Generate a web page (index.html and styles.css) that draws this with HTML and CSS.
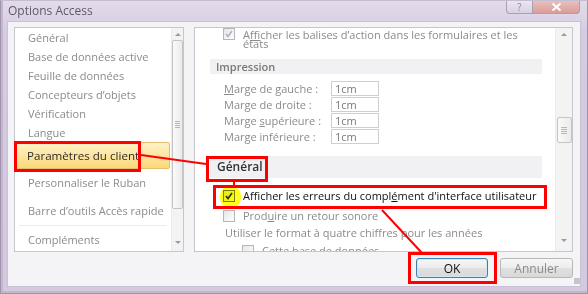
FILE: index.html
```html
<!DOCTYPE html>
<html lang="fr">
<head>
<meta charset="utf-8">
<title>Options Access</title>
<link rel="stylesheet" href="styles.css">
</head>
<body>
<div class="window">
  <div class="titlebar">
    <span class="title">Options Access</span>
    <div class="caption">
      <span class="cap help">?</span>
      <span class="cap close"><svg width="11" height="8" viewBox="0 0 11 8"><path d="M1.5 0.5 L9.5 7.5 M9.5 0.5 L1.5 7.5" stroke="#ffffff" stroke-width="2" fill="none"/></svg></span>
    </div>
  </div>
  <div class="client">
    <div class="panels">
      <div class="nav">
        <ul class="nav-list">
          <li class="item">Général</li>
          <li class="item">Base de données active</li>
          <li class="item">Feuille de données</li>
          <li class="item">Concepteurs d’objets</li>
          <li class="item">Vérification</li>
          <li class="item">Langue</li>
          <li class="item sel">Paramètres du client</li>
          <li class="item tall">Personnaliser le Ruban</li>
          <li class="item tall">Barre d’outils Accès rapide</li>
          <li class="sep"></li>
          <li class="item tall">Compléments</li>
        </ul>
        <div class="vscroll nav-scroll">
          <span class="arr"><span class="tri up"></span></span>
          <span class="thumb nav-thumb"><span class="grip"></span></span>
          <span class="fill"></span>
          <span class="arr arr-down"><span class="tri down"></span></span>
        </div>
      </div>
      <div class="content">
        <div class="pane">
          <div class="opt opt-first">
            <span class="cb cb-first"><svg class="chk" width="10" height="10" viewBox="0 0 10 10"><path d="M2 5 L4 7.5 L8 2" stroke="#a9b3c6" stroke-width="1.6" fill="none"/></svg></span>
            <span class="wrap">A<u>f</u>ficher les balises d’action dans les formulaires et les<br>états</span>
          </div>
          <div class="band">Impression</div>
          <div class="fields">
            <div class="field"><span class="lbl"><u>M</u>arge de gauche :</span><span class="input">1cm</span></div>
            <div class="field"><span class="lbl">Marge de droite :</span><span class="input">1cm</span></div>
            <div class="field"><span class="lbl">Marge <u>s</u>upérieure :</span><span class="input">1cm</span></div>
            <div class="field"><span class="lbl">Mar<u>g</u>e inférieure :</span><span class="input">1cm</span></div>
          </div>
          <div class="band band-strong">Général</div>
          <div class="opt opt-err">
            <span class="cb cb-on"><svg class="chk" width="10" height="10" viewBox="0 0 10 10"><path d="M2 5 L4 7.5 L8 2" stroke="#2b3a5a" stroke-width="1.7" fill="none"/></svg></span>
            <span>Afficher les erreurs du compl<u>é</u>ment d'interface utilisateur</span>
          </div>
          <div class="opt opt-snd">
            <span class="cb"></span>
            <span>Prod<u>u</u>ire un retour sonore</span>
          </div>
          <div class="plain">Utiliser le format à quatre chiffres pour les années</div>
          <div class="opt opt-sub">
            <span class="cb"></span>
            <span>Cette base de données</span>
          </div>
        </div>
        <div class="vscroll pane-scroll">
          <span class="arr"><span class="tri up"></span></span>
          <span class="thumb pane-thumb"><span class="grip"></span></span>
          <span class="fill"></span>
          <span class="arr arr-down2"><span class="tri down"></span></span>
        </div>
      </div>
    </div>
    <div class="footer">
      <button class="btn ok">OK</button>
      <button class="btn">Annuler</button>
      <span class="sizegrip"></span>
    </div>
  </div>
  <div class="marker"></div>
  <svg class="annot" width="588" height="294" viewBox="0 0 588 294">
    <g fill="none" stroke="#ff0000">
      <rect x="14.5" y="141.5" width="124" height="28" stroke-width="3"/>
      <rect x="206.5" y="156.5" width="59" height="23" stroke-width="3"/>
      <rect x="213.5" y="185.5" width="331" height="21" stroke-width="3"/>
      <rect x="408.5" y="252.5" width="86" height="29" stroke-width="3"/>
      <path d="M140 154 L205 163" stroke-width="2"/>
      <path d="M233 180 L233 185" stroke-width="2"/>
      <path d="M381 209 L421 252" stroke-width="2"/>
    </g>
  </svg>
</div>
</body>
</html>
```

FILE: styles.css
```css
html, body {
  margin: 0;
  padding: 0;
}
body {
  width: 588px;
  height: 294px;
  overflow: hidden;
  font-family: "Open Sans", "Noto Sans", sans-serif;
  background: #ffffff;
}
.window {
  position: relative;
  width: 588px;
  height: 294px;
  box-sizing: border-box;
  background: linear-gradient(#e3dbea, #d6cce2 30px, #d4cae0);
  border: 1px solid #a094ad;
  border-top-color: #c6bdd0;
  box-shadow: inset 2px 0 0 #c3b7d0, inset 0 -2px 0 #c3b7d0;
  padding: 0 6px 6px 6px;
  display: flex;
  flex-direction: column;
}
.titlebar {
  height: 20px;
  display: flex;
  justify-content: space-between;
  align-items: flex-start;
}
.title {
  margin: 3px 0 0 1px;
  font-size: 12px;
  line-height: 14px;
  color: #5f5a69;
}
.caption {
  display: flex;
  margin-right: 1px;
}
.cap {
  height: 13px;
  box-sizing: border-box;
  border: 1px solid #a99fb6;
  border-top: none;
  display: flex;
  align-items: center;
  justify-content: center;
}
.help {
  width: 27px;
  border-radius: 0 0 0 4px;
  background: linear-gradient(#ebe6f0, #d9d1e3);
  color: #8e879a;
  font-size: 10px;
  line-height: 12px;
}
.close {
  width: 47px;
  border-left: none;
  border-radius: 0 0 4px 0;
  background: linear-gradient(#e9c0bc, #d99d98);
}
.client {
  flex: 1;
  box-sizing: border-box;
  border: 1px solid #cbc1d6;
  background: #f4f3f6;
  padding: 5px 7px 0 6px;
  display: flex;
  flex-direction: column;
}
.panels {
  display: flex;
  gap: 10px;
  height: 225px;
}
.nav {
  width: 170px;
  box-sizing: border-box;
  border: 1px solid #c8c6cd;
  background: #ffffff;
  display: flex;
}
.nav-list {
  flex: 1;
  list-style: none;
  margin: 0;
  padding: 0;
  overflow: hidden;
}
.item {
  height: 19px;
  line-height: 19px;
  padding-left: 13px;
  font-size: 11px;
  color: #8d8a8a;
  white-space: nowrap;
}
.item.sel {
  box-sizing: border-box;
  height: 27px;
  width: 154px;
  margin-left: 1px;
  border: 1px solid #e2c06f;
  border-radius: 2px;
  background: linear-gradient(#fff2c8, #fde6a4 45%, #fcd97a);
  padding-left: 10px;
  line-height: 25px;
  font-size: 11.6px;
  color: #2c2c2c;
}
.item.tall {
  height: 28px;
  line-height: 28px;
}
.sep {
  height: 1px;
  margin: 0 4px;
  background: #ebebeb;
}
.vscroll {
  display: flex;
  flex-direction: column;
  align-items: center;
  background: #f3f3f3;
  border-left: 1px solid #ececec;
  box-sizing: border-box;
}
.nav-scroll {
  width: 12px;
}
.pane-scroll {
  width: 17px;
}
.arr {
  height: 12px;
  width: 100%;
  display: flex;
  align-items: center;
  justify-content: center;
  flex: none;
}
.arr-down {
  margin-bottom: 3px;
}
.arr-down2 {
  margin-bottom: 5px;
}
.tri {
  width: 0;
  height: 0;
  border-left: 3px solid transparent;
  border-right: 3px solid transparent;
}
.tri.up {
  border-bottom: 3px solid #9c9c9c;
}
.tri.down {
  border-top: 3px solid #9c9c9c;
}
.fill {
  flex: 1;
}
.thumb {
  box-sizing: border-box;
  border: 1px solid #c4c4c4;
  border-radius: 2px;
  background: linear-gradient(to right, #fafafa, #ebebeb);
  display: flex;
  align-items: center;
  justify-content: center;
  flex: none;
}
.nav-thumb {
  width: 11px;
  height: 169px;
}
.pane-thumb {
  width: 15px;
  height: 26px;
  margin-top: 77px;
}
.grip {
  width: 6px;
  height: 7px;
  background: repeating-linear-gradient(#a8a8a8 0 1px, transparent 1px 2px);
  opacity: 0.8;
}
.nav-thumb .grip {
  width: 5px;
}
.content {
  width: 379px;
  box-sizing: border-box;
  border: 1px solid #c8c6cd;
  background: #ffffff;
  display: flex;
}
.pane {
  flex: 1;
  overflow: hidden;
  font-size: 11px;
  color: #8d8a8a;
}
.opt {
  display: flex;
  align-items: center;
  margin-left: 28px;
  height: 13px;
  line-height: 13px;
  white-space: nowrap;
}
.cb {
  width: 12px;
  height: 12px;
  box-sizing: border-box;
  border: 1px solid #b6b6b6;
  background: linear-gradient(135deg, #e6e6e6, #ffffff);
  margin-right: 8px;
  flex: none;
  display: flex;
  align-items: center;
  justify-content: center;
}
.chk {
  display: block;
}
.opt-first {
  align-items: flex-start;
  height: auto;
  margin-top: 2px;
}
.cb-first {
  margin-top: -2px;
}
.wrap {
  line-height: 9px;
}
.band {
  box-sizing: border-box;
  margin: 11px 0 0 15px;
  width: 332px;
  height: 15px;
  line-height: 15px;
  padding-left: 6px;
  background: #f1f1f3;
  font-weight: 600;
  color: #7a7878;
}
.band-strong {
  margin-top: 12px;
  height: 22px;
  line-height: 22px;
  padding-left: 7px;
  font-size: 12px;
  color: #333333;
}
.fields {
  margin: 7px 0 0 29px;
}
.field {
  display: flex;
  align-items: center;
  height: 15px;
  margin-bottom: 1px;
}
.lbl {
  width: 107px;
  white-space: nowrap;
}
.input {
  box-sizing: border-box;
  width: 48px;
  height: 15px;
  border: 1px solid #cfcfcf;
  padding-left: 3px;
  line-height: 13px;
  color: #7a7878;
}
.opt-err {
  margin-top: 11px;
  color: #111111;
}
.cb-on {
  border-color: #7d7d5a;
}
.opt-snd {
  margin-top: 7px;
}
.plain {
  margin: 4px 0 0 30px;
  height: 13px;
  line-height: 13px;
  white-space: nowrap;
}
.opt-sub {
  margin-top: 5px;
  margin-left: 47px;
}
.footer {
  display: flex;
  justify-content: flex-end;
  align-items: flex-start;
  gap: 12px;
  margin-top: 6px;
}
.btn {
  width: 73px;
  height: 20px;
  box-sizing: border-box;
  padding: 0;
  border: 1px solid #b7b7b7;
  border-radius: 3px;
  background: linear-gradient(#f7f7f7, #ececec 50%, #e0e0e0 50%, #d9d9d9);
  font-family: "Open Sans", "Noto Sans", sans-serif;
  font-size: 12px;
  color: #8a8a8a;
}
.btn.ok {
  width: 72px;
  border-color: #3c7fb1;
  box-shadow: inset 0 0 0 1px #cfe9f7;
  color: #111111;
}
.sizegrip {
  width: 6px;
  height: 6px;
  margin: 20px -7px 0 -11px;
  background: radial-gradient(circle, #c9c3cf 0.8px, transparent 1px) 0 0 / 2px 2px;
}
.marker {
  position: absolute;
  left: 219px;
  top: 185px;
  width: 21px;
  height: 22px;
  border-radius: 45%;
  background: #ffff1a;
  filter: blur(0.7px);
  mix-blend-mode: multiply;
  pointer-events: none;
}
.annot {
  position: absolute;
  left: 0;
  top: 0;
  pointer-events: none;
}
```
